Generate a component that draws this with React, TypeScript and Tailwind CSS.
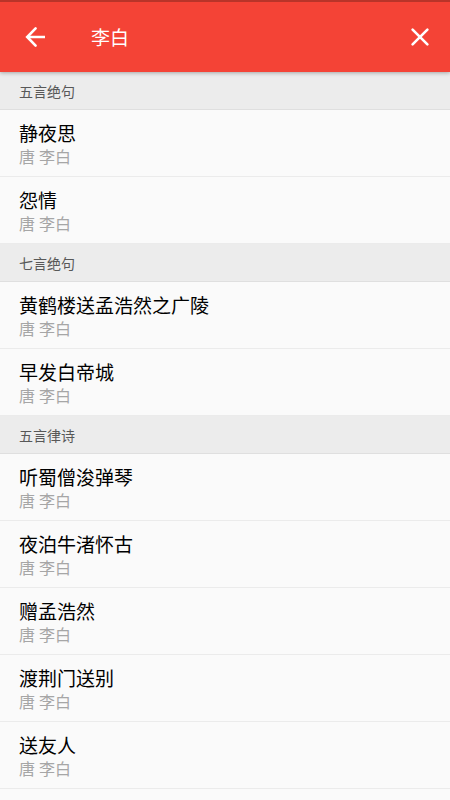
import { useState } from "react";

const groups = [
  { title: "五言绝句", poems: ["静夜思", "怨情"] },
  { title: "七言绝句", poems: ["黄鹤楼送孟浩然之广陵", "早发白帝城"] },
  { title: "五言律诗", poems: ["听蜀僧浚弹琴", "夜泊牛渚怀古", "赠孟浩然", "渡荆门送别", "送友人"] },
];

export default function App() {
  const [query, setQuery] = useState("李白");
  return (
    <div className="min-h-screen bg-[#fafafa] font-[Roboto,'Noto_Sans_CJK_SC',sans-serif]">
      <header className="relative flex h-[72px] items-center border-t-2 border-[#b93429] bg-[#f44336] pr-3.5 pl-5 text-white shadow-[0_1px_4px_rgba(0,0,0,0.3)]">
        <button type="button" aria-label="返回" className="flex size-8 items-center justify-center">
          <svg viewBox="0 0 30 30" className="size-[30px]" fill="none" stroke="currentColor" strokeWidth="2.6" strokeLinecap="round" strokeLinejoin="round">
            <path d="M24 15H6.6" strokeLinecap="butt" strokeWidth="2.5" />
            <path d="M14.6 6.4L6.2 15l8.4 8.6" strokeLinejoin="miter" />
          </svg>
        </button>
        <input
          aria-label="搜索"
          value={query}
          onChange={(e) => setQuery(e.target.value)}
          className="ml-[39px] min-w-0 flex-1 bg-transparent pt-1 text-[19px] leading-7 outline-none"
        />
        <button type="button" aria-label="清除" onClick={() => setQuery("")} className="flex size-8 items-center justify-center">
          <svg viewBox="0 0 30 30" className="size-[30px]" fill="none" stroke="currentColor" strokeWidth="2.6" strokeLinecap="round">
            <path d="M7.6 7.6l14.8 14.8M22.4 7.6L7.6 22.4" />
          </svg>
        </button>
      </header>
      <main>
        {groups.map((group) => (
          <section key={group.title}>
            <h2 className="flex h-[38px] items-center border-b border-[#dfdfdf] bg-[#ececec] px-[19px] pt-0.5 text-[14px] leading-5 text-[#585858]">
              {group.title}
            </h2>
            <ul>
              {group.poems.map((poem) => (
                <li key={poem} className="h-[67px] border-b border-[#ebebeb] px-[19px] pt-[13px]">
                  <h3 className="text-[19px] leading-6 text-black">{poem}</h3>
                  <p className="text-base leading-[22px] text-[#a6a6a6]">唐 李白</p>
                </li>
              ))}
            </ul>
          </section>
        ))}
      </main>
    </div>
  );
}
